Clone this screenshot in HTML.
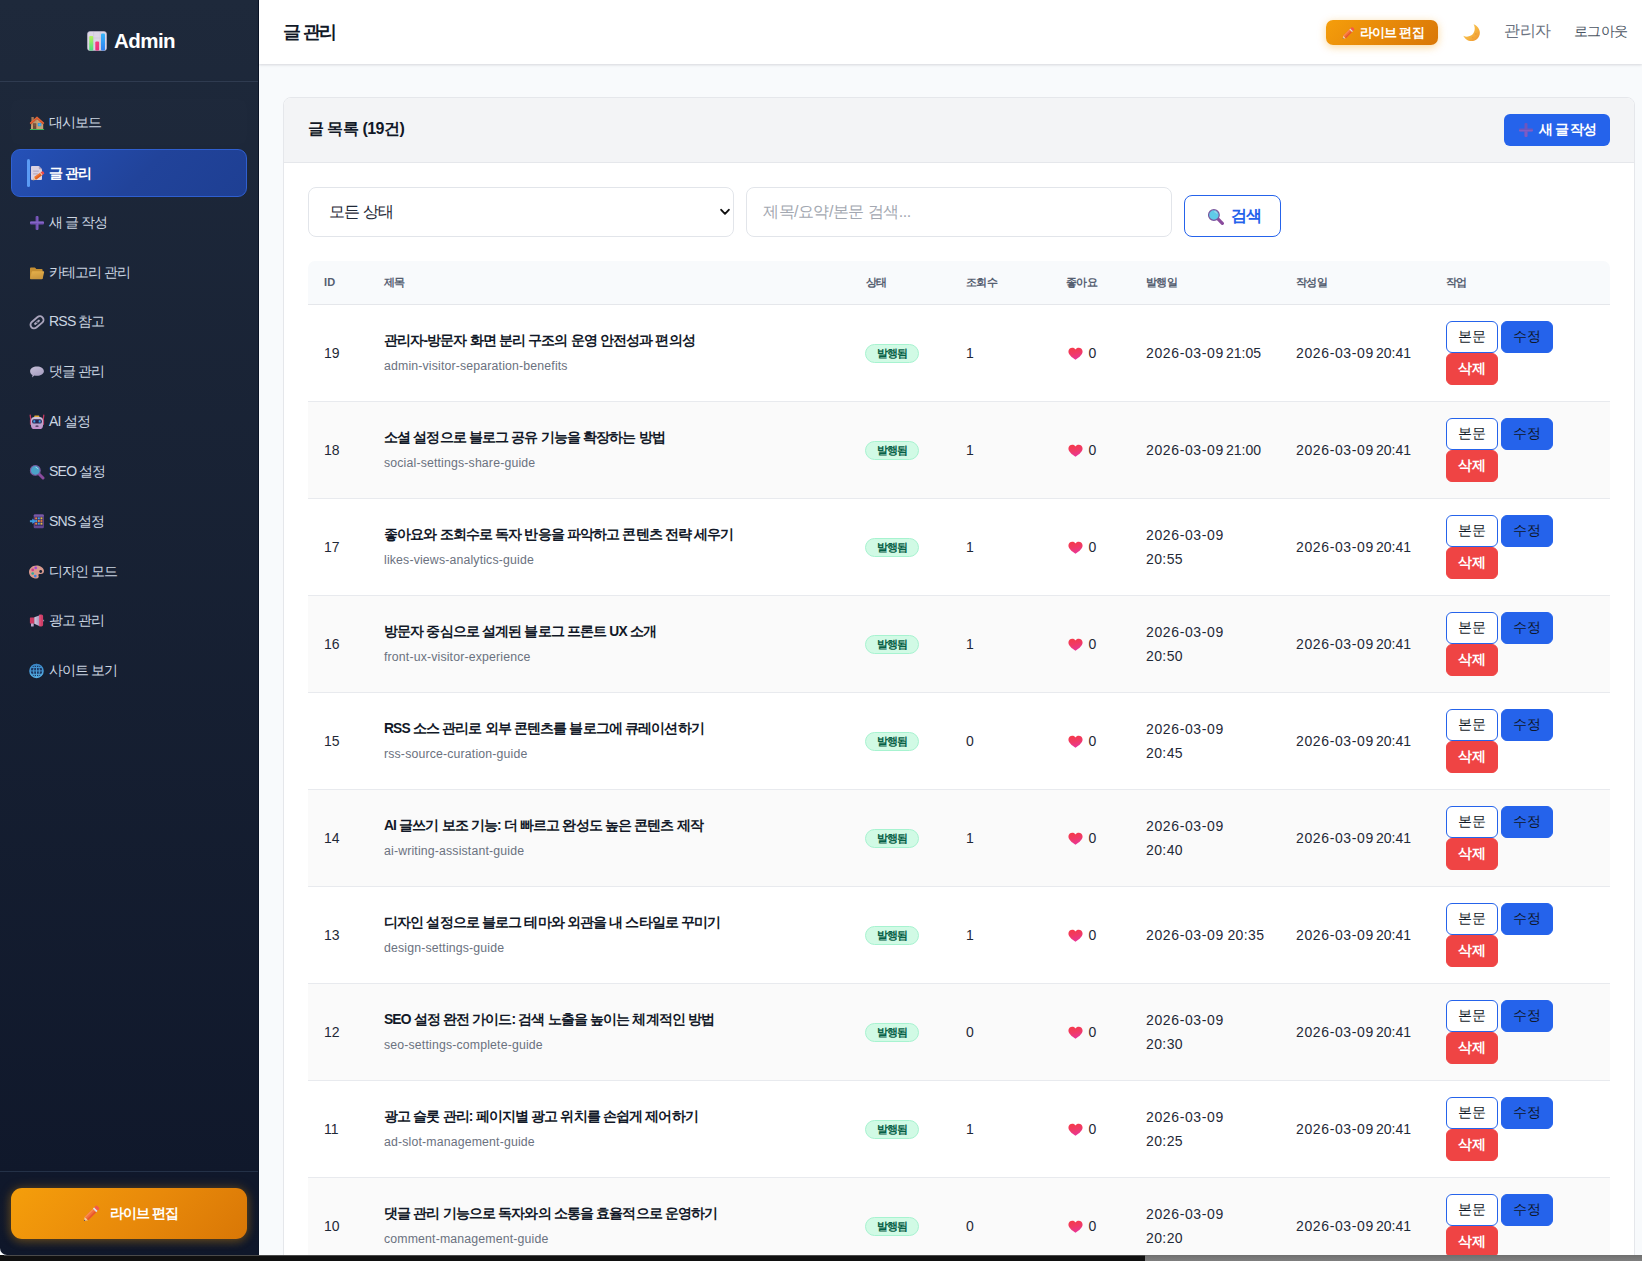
<!DOCTYPE html>
<html lang="ko">
<head>
<meta charset="utf-8">
<title>글 관리 - Admin</title>
<style>
*{box-sizing:border-box;margin:0;padding:0}
html,body{width:1642px;height:1261px;overflow:hidden}
body{font-family:"Liberation Sans",sans-serif;background:#f8fafc;color:#111827;position:relative}
svg{display:block}

/* ---------- sidebar ---------- */
.sidebar{position:absolute;left:0;top:0;width:259px;height:1255px;background:linear-gradient(180deg,#1e293b 0%,#0f172a 100%);border-right:1px solid #0b1426;border-bottom-left-radius:7px;overflow:hidden}
.brand{position:absolute;left:0;top:0;width:258px;height:82px;border-bottom:1px solid #2f3b50}
.brand .logo{position:absolute;left:87px;top:31px;width:20px;height:20px}
.brand .name{position:absolute;left:114px;top:28px;font-size:20.5px;line-height:26px;font-weight:700;color:#fff;letter-spacing:-.55px}
.nav{position:absolute;left:11px;top:99px;width:236px}
.nav a{display:block;position:relative;height:46px;margin-bottom:3.85px;border-radius:9px;color:#cbd5e1;text-decoration:none;font-size:14px;line-height:46px;padding-left:38px;white-space:nowrap;letter-spacing:-1px}
.nav a u{text-decoration:none;letter-spacing:-.75px}
.nav a .ic{position:absolute;left:18px;top:16px;width:16px;height:16px}
.nav a.hov{background:rgba(255,255,255,.008)}
.nav a.active{height:48px;line-height:46px;margin-top:0;margin-bottom:1.85px;background:linear-gradient(135deg,#2551b8 0%,#21439a 55%,#1e3f93 100%);border:1px solid #2f5fd0;color:#fff;font-weight:700;padding-left:37px}
.nav a.active .ic{left:17px;top:15px}
.nav a.active:before{content:"";position:absolute;left:15px;top:9px;width:3px;height:28px;border-radius:2px;background:#5b9bf5}
.sfoot{position:absolute;left:0;top:1171px;width:258px;height:84px;border-top:1px solid #243147}
.livebtn{position:absolute;left:11px;top:16px;width:236px;height:51px;border-radius:11px;background:linear-gradient(135deg,#f59e0b 0%,#e8890a 55%,#d97706 100%);box-shadow:0 0 12px rgba(245,158,11,.28),0 3px 10px rgba(245,158,11,.2);color:#fff;font-weight:700;font-size:14px;line-height:51px;text-align:left;white-space:nowrap}
.livebtn .ic{position:absolute;left:72px;top:16px;width:18px;height:18px}
.livebtn span{position:absolute;left:99px;top:0;letter-spacing:-.95px}

/* ---------- topbar ---------- */
.topbar{position:absolute;left:259px;top:0;width:1383px;height:64px;background:#fff;box-shadow:0 1px 3px rgba(15,23,42,.10),0 1px 2px rgba(15,23,42,.05)}
.topbar h1{position:absolute;left:24px;top:19px;font-size:18.4px;line-height:26px;font-weight:700;color:#111827;white-space:nowrap;letter-spacing:-2.1px;word-spacing:1px}
.tb-live{position:absolute;left:1067px;top:20px;width:112px;height:25px;border-radius:7px;background:linear-gradient(135deg,#f59e0b 0%,#e48509 60%,#d97706 100%);box-shadow:0 2px 9px rgba(245,158,11,.40);color:#fff;font-size:13px;font-weight:700;line-height:25px;white-space:nowrap}
.tb-live .ic{position:absolute;left:15.5px;top:5.500px;width:13.500px;height:13.500px}
.tb-live span{position:absolute;left:34px;top:0;letter-spacing:-.8px}
.moon{position:absolute;left:1202.5px;top:23px;width:19px;height:19px}
.tb-user{position:absolute;left:1245px;top:20px;font-size:15.6px;line-height:22px;color:#6b7280;white-space:nowrap;letter-spacing:-.5px}
.tb-out{position:absolute;left:1315px;top:21px;font-size:14px;line-height:20px;color:#4b5563;white-space:nowrap;letter-spacing:-.6px}

/* ---------- card ---------- */
.card{position:absolute;left:283px;top:97px;width:1352px;height:1200px;background:#fff;border:1px solid #e5e7eb;border-radius:8px;overflow:hidden}
.card-h{position:absolute;left:0;top:0;width:1350px;height:65px;background:#f3f4f6;border-bottom:1px solid #e5e7eb}
.card-h h2{position:absolute;left:24px;top:19px;font-size:16px;line-height:24px;font-weight:700;color:#111827;white-space:nowrap;letter-spacing:-.5px}
.newbtn{position:absolute;left:1220px;top:16px;width:106px;height:32px;border-radius:6px;background:#2563eb;color:#fff;font-size:13.5px;font-weight:700;line-height:32px;white-space:nowrap}
.newbtn .ic{position:absolute;left:14px;top:8px;width:16px;height:16px}
.newbtn span{position:absolute;left:35px;top:0;letter-spacing:-1.05px}

/* filters */
.sel{position:absolute;left:24px;top:89px;width:426px;height:50px;border:1px solid #e2e5ea;border-radius:8px;background:#fff;font-size:16px;line-height:48px;padding-left:20px;color:#1f2937;white-space:nowrap;letter-spacing:-.8px}
.sel .chev{position:absolute;right:3px;top:20px;width:10px;height:8px}
.inp{position:absolute;left:462px;top:89px;width:426px;height:50px;border:1px solid #e2e5ea;border-radius:8px;background:#fff;font-size:16px;line-height:48px;padding-left:16px;color:#a3a8b1;white-space:nowrap;letter-spacing:-.5px}
.sbtn{position:absolute;left:900px;top:97px;width:97px;height:42px;border:1px solid #2563eb;border-radius:8px;background:#fff;color:#2563eb;font-size:15.600px;font-weight:700;line-height:40px;white-space:nowrap}
.sbtn .ic{position:absolute;left:21.500px;top:11.500px;width:17.500px;height:17.500px}
.sbtn .ic circle:first-of-type{fill:#5fcbe8}
.sbtn span{position:absolute;left:46px;top:-.5px;letter-spacing:-1.500px}

/* table */
.tbl{position:absolute;left:24px;top:163px;width:1302px}
.thead{position:relative;height:44px;background:#f8fafc;border-bottom:1px solid #e5e7eb;border-radius:7px 7px 0 0;font-size:11.2px;color:#566071;font-weight:700}
.thead span{position:absolute;top:0;line-height:42px;white-space:nowrap;letter-spacing:-.6px}
.thead span.id{letter-spacing:.3px;font-size:11px}
.row{position:relative;height:97px;border-bottom:1px solid #e8eaee;background:#fff}
.row.alt{background:#fafafa}
.row>*{position:absolute;white-space:nowrap}
.c-id{left:16px;top:37px;font-size:14px;line-height:22px;color:#1f2937}
.c-t{left:76px;top:24px;font-size:13.8px;line-height:24px;font-weight:700;color:#111827;letter-spacing:-.85px}
.c-s{left:76px;top:52px;font-size:12.3px;line-height:18px;color:#6b7280;letter-spacing:.16px}
.badge{left:557px;top:39px;width:54px;height:19px;border-radius:10px;background:#d1fae5;border:1px solid #a7f3d0;color:#065f46;font-size:11px;font-weight:700;line-height:16.500px;text-align:center;letter-spacing:-.7px}
.c-v{left:658px;top:37px;font-size:14px;line-height:22px;color:#1f2937}
.c-h{left:760.200px;top:42px;width:15px;height:13.500px}
.c-l{left:780.5px;top:37px;font-size:14px;line-height:22px;color:#1f2937}
.c-p{left:838px;font-size:14px;line-height:24px;color:#1f2937;letter-spacing:.63px;word-spacing:-1px}
.row i{font-style:normal;letter-spacing:.4px}
.row i.n{letter-spacing:0;margin-left:-1.4px}
.c-p.one{top:36px}.c-p.two{top:24px}
.c-c{left:988px;top:36px;font-size:14px;line-height:24px;color:#1f2937;letter-spacing:.63px;word-spacing:-1px}
.b{width:52px;height:32px;border-radius:6px;font-size:13.5px;line-height:30px;text-align:center;letter-spacing:-.3px}
.b1{left:1138px;top:16px;border:1px solid #2563eb;background:#fff;color:#111827}
.b2{left:1193px;top:16px;border:1px solid #2563eb;background:#2563eb;color:#0f172a}
.b3{left:1138px;top:48px;border:1px solid #ef4444;background:#ef4444;color:#fff;font-weight:700}

/* bottom window edge */
.strip{position:absolute;left:0;top:1255px;width:1642px;height:6px;background:#101010}
.strip i{position:absolute;left:1145px;top:0;width:497px;height:6px;background:linear-gradient(180deg,#6f6f6f,#7f7f7f)}
.strip b{position:absolute;left:4px;top:0;width:1141px;height:1px;background:#4a4a4a}
</style>
</head>
<body>
<aside class="sidebar">
<div class="brand"><svg class="logo" viewBox="0 0 20 20"><defs><linearGradient id="lg1" x1="0" y1="0" x2="0" y2="1"><stop offset="0" stop-color="#b6f25a"/><stop offset="1" stop-color="#4ade80"/></linearGradient><linearGradient id="lg2" x1="0" y1="0" x2="0" y2="1"><stop offset="0" stop-color="#f43f7f"/><stop offset="1" stop-color="#e8317a"/></linearGradient><linearGradient id="lg3" x1="0" y1="0" x2="0" y2="1"><stop offset="0" stop-color="#38b6f9"/><stop offset="1" stop-color="#2f7ff0"/></linearGradient></defs><rect x=".5" y=".5" width="19" height="19" rx="2.6" fill="#ddd6e6" stroke="#c5bdd2" stroke-width=".6"/><path d="M6.6 1v18M13.2 1v18M1 7h18M1 13h18" stroke="#c9c1d6" stroke-width=".5"/><rect x="2.2" y="5" width="4" height="14.4" rx="1" fill="url(#lg1)"/><rect x="8.3" y="10.6" width="3.8" height="8.8" rx="1" fill="url(#lg2)"/><rect x="14" y="2.6" width="4" height="16.8" rx="1" fill="url(#lg3)"/></svg><div class="name">Admin</div></div>
<nav class="nav">
<a href="#" class="hov"><svg class="ic" viewBox="0 0 16 16"><rect x="2.400" y="2" width="2.400" height="5.500" fill="#a57a55"/><path d="M8 3.800 2 9.200V14h12.200V9.200z" fill="#c7a074"/><path d="M2 9.200 8 3.800v2.600L2 11.400z" fill="#b08a62" opacity=".55"/><path d="M8 1.500.700 8.100l1.300 1.400L8 4.100l6 5.400 1.300-1.400z" fill="#d9532c"/><path d="M8 1.500.700 8.100l.6.700L8 2.900l6.700 5.900.6-.7z" fill="#e8703c" opacity=".7"/><rect x="4" y="8.300" width="3.300" height="5.700" fill="#6f4b39"/><rect x="4.600" y="8.900" width="2.100" height="2.200" fill="#7d5744"/><rect x="8.800" y="8" width="3.500" height="3.200" fill="#2f8fd8"/><rect x="9.400" y="8.600" width="2.300" height="2" fill="#4db4f0"/><rect x=".8" y="14" width="14.400" height="1.100" rx=".5" fill="#3fb35a"/></svg>대시보드</a>
<a href="#" class="active"><svg class="ic" viewBox="0 0 16 16"><path d="M3 1h6.800L13 4.200V14a1 1 0 0 1-1 1H3a1 1 0 0 1-1-1V2a1 1 0 0 1 1-1z" fill="#dcd2e2"/><path d="M9.800 1 13 4.200H10.700a.9.900 0 0 1-.9-.9z" fill="#b3a5bf"/><path d="M4.200 6.200h5.600M4.200 8.800h4.600" stroke="#b7abc2" stroke-width="1.300"/><path d="M5 12.100 11.400 7.500l1.900 2.600L6.900 14.700z" fill="#f2762e"/><path d="M5.900 13.400 12.300 8.800l1 1.300L6.900 14.700z" fill="#e0601f"/><path d="M11.400 7.500l1.500-1.100a1 1 0 0 1 1.400.2l.8 1.100a1 1 0 0 1-.2 1.400l-1.600 1z" fill="#ef4a4a"/><path d="M11 7.800l.6-.5 1.900 2.600-.6.5z" fill="#f3d9c9"/><path d="M5 12.100 3.600 15.600l3.300-.9z" fill="#e8c19a"/><path d="M4 14.600l-.4 1 1-.3z" fill="#3b3345"/></svg>글 관리</a>
<a href="#"><svg class="ic" viewBox="0 0 16 16"><path d="M6.600 2a1 1 0 0 1 1-1h.8a1 1 0 0 1 1 1v4.600H14a1 1 0 0 1 1 1v.8a1 1 0 0 1-1 1H9.400V14a1 1 0 0 1-1 1H7.600a1 1 0 0 1-1-1V9.400H2a1 1 0 0 1-1-1V7.600a1 1 0 0 1 1-1h4.600z" fill="#7150b2"/><path d="M1 7.600a1 1 0 0 1 1-1h12a1 1 0 0 1 1 1V8H1z" fill="#8a6bcb" opacity=".8"/><path d="M8 1h.4a1 1 0 0 1 1 1v12a1 1 0 0 1-1 1H8z" fill="#8060c2" opacity=".6"/></svg>새 글 작성</a>
<a href="#"><svg class="ic" viewBox="0 0 16 16"><defs><linearGradient id="fg" x1="0" y1="0" x2=".3" y2="1"><stop offset="0" stop-color="#e6b04a"/><stop offset="1" stop-color="#c9963e"/></linearGradient></defs><path d="M1 3.500a1 1 0 0 1 1-1h3.600c.4 0 .7.200.9.500l.8 1.100h5.300a1 1 0 0 1 1 1V13a1 1 0 0 1-1 1H2a1 1 0 0 1-1-1z" fill="#c58f33"/><path d="M3.700 6.300h10.600a.8.800 0 0 1 .8 1L13.700 13.400a1 1 0 0 1-1 .8H1.900a.7.700 0 0 1-.7-.9L2.700 7a1 1 0 0 1 1-.7z" fill="url(#fg)"/></svg>카테고리 관리</a>
<a href="#"><svg class="ic" viewBox="0 0 16 16"><g transform="rotate(-40 8 8.300)" fill="none" stroke="#aaa4bc"><rect x=".6" y="4.700" width="14.800" height="7.200" rx="3.600" stroke-width="1.900"/><path d="M5.600 8.300h4.800" stroke-width="2.200" stroke-linecap="round"/></g><g transform="rotate(-40 8 8.300)"><circle cx="8" cy="8.300" r=".7" fill="#1c2539"/></g></svg><u>RSS</u> 참고</a>
<a href="#"><svg class="ic" viewBox="0 0 16 16"><defs><linearGradient id="sg" x1="0" y1="0" x2=".6" y2="1"><stop offset="0" stop-color="#c6c0d8"/><stop offset="1" stop-color="#a69dc0"/></linearGradient></defs><path d="M8 2.600c3.800 0 6.900 2 6.900 4.600S11.800 11.800 8 11.800c-.9 0-1.800-.1-2.600-.300L3 13.400l.5-2.300C2 10.200 1.100 8.800 1.100 7.200 1.100 4.600 4.200 2.600 8 2.600z" fill="url(#sg)"/></svg>댓글 관리</a>
<a href="#"><svg class="ic" viewBox="0 0 16 16"><defs><linearGradient id="rg" x1="0" y1="0" x2="0" y2="1"><stop offset="0" stop-color="#cfc4dd"/><stop offset=".6" stop-color="#b9a5cd"/><stop offset="1" stop-color="#c48dcb"/></linearGradient></defs><path d="M1.200 1.200l.8 6M14.800 1.200l-.8 6" stroke="#c5375f" stroke-width="1.300" stroke-linecap="round"/><rect x=".9" y="5.600" width="2" height="5.400" rx=".9" fill="#b4456f"/><rect x="13.100" y="5.600" width="2" height="5.400" rx=".9" fill="#b4456f"/><rect x="5.200" y="1.600" width="5.200" height="2" rx=".8" fill="#e3aa39"/><rect x="2" y="3" width="12" height="12" rx="3.600" fill="url(#rg)"/><rect x="3.100" y="5.300" width="9.800" height="4.300" rx="1.900" fill="#2a2452"/><rect x="4.300" y="6.300" width="2" height="2.300" rx=".4" fill="#3a9fe6"/><rect x="9.700" y="6.300" width="2" height="2.300" rx=".4" fill="#3a9fe6"/><rect x="6.500" y="11.500" width="3" height="1.300" rx=".4" fill="#3d2b4d"/></svg><u>AI</u> 설정</a>
<a href="#"><svg class="ic" viewBox="0 0 16 16"><path d="M10 10 14 14" stroke="#8a4b9d" stroke-width="3" stroke-linecap="round"/><circle cx="6.300" cy="6.400" r="4.900" fill="#4ba3c8"/><circle cx="6.300" cy="6.400" r="4.900" fill="none" stroke="#7b589f" stroke-width="1.100"/><path d="M7 3.300a3.200 3.200 0 0 1 2 1.500" stroke="#9fd6ea" stroke-width="1" fill="none" stroke-linecap="round"/></svg><u>SEO</u> 설정</a>
<a href="#"><svg class="ic" viewBox="0 0 16 16"><rect x="4.700" y=".5" width="10.200" height="13.700" rx="1.300" fill="#64468f"/><rect x="4.700" y=".5" width="10.200" height="2.200" rx="1.100" fill="#7a5aa8"/><rect x="5.700" y="2.800" width="8.200" height="9" fill="#3a2d63"/><g><rect x="6.200" y="3.400" width="1.900" height="1.900" fill="#e8863a"/><rect x="8.850" y="3.400" width="1.900" height="1.900" fill="#3fa0e0"/><rect x="11.500" y="3.400" width="1.900" height="1.900" fill="#e6c040"/><rect x="6.200" y="6.050" width="1.900" height="1.900" fill="#3fa0e0"/><rect x="8.850" y="6.050" width="1.900" height="1.900" fill="#e8863a"/><rect x="11.500" y="6.050" width="1.900" height="1.900" fill="#e07a34"/><rect x="6.200" y="8.700" width="1.900" height="1.900" fill="#e8863a"/><rect x="8.850" y="8.700" width="1.900" height="1.900" fill="#3fa0e0"/><rect x="11.500" y="8.700" width="1.900" height="1.900" fill="#e6c040"/></g><path d="M3.300 4.500 6.800 7.200 3.300 9.900V8.200H.9V6.200h2.400z" fill="#3d9be0"/></svg><u>SNS</u> 설정</a>
<a href="#"><svg class="ic" viewBox="0 0 16 16"><path d="M7.400 1.400c4.200 0 7.600 2.500 7.600 5.700 0 2-1.400 3-3.100 3h-1.500c-.9 0-1.300.8-.9 1.500.6 1.100 0 3-2.100 3C3.300 14.600 0 11.700 0 8s3.300-6.600 7.400-6.600z" fill="#d99a8e"/><circle cx="11.700" cy="7.500" r="1.400" fill="#182035"/><circle cx="6.700" cy="3.900" r="1.350" fill="#a548d2"/><circle cx="3.700" cy="5.900" r="1.350" fill="#d23a8c"/><circle cx="3.700" cy="9.500" r="1.350" fill="#2fa79a"/><circle cx="6.300" cy="12.100" r="1.350" fill="#3a7fe0"/></svg>디자인 모드</a>
<a href="#"><svg class="ic" viewBox="0 0 16 16"><defs><linearGradient id="cg" x1="0" y1="0" x2="1" y2="0"><stop offset="0" stop-color="#d3c9df"/><stop offset="1" stop-color="#a99cc0"/></linearGradient></defs><rect x="2" y="10" width="2.700" height="3.600" rx=".5" fill="#b9a9cc"/><rect x=".9" y="4.500" width="4.600" height="6" rx=".6" fill="#cc3a63"/><path d="M5.300 4.300 10.200 2.500v10.600L5.300 10.800z" fill="url(#cg)"/><rect x="10" y="1.400" width="4.100" height="12.100" rx="1.700" fill="#cf3f68"/><rect x="10" y="1.400" width="1.600" height="12.100" rx=".8" fill="#e2587f" opacity=".8"/><rect x="14" y="6.800" width="1.100" height="1.500" fill="#8d8aa3"/></svg>광고 관리</a>
<a href="#"><svg class="ic" viewBox="0 0 16 16"><defs><linearGradient id="gg" x1="0" y1="0" x2="0" y2="1"><stop offset="0" stop-color="#3a86c6"/><stop offset="1" stop-color="#57b2e6"/></linearGradient></defs><circle cx="7.500" cy="7.900" r="7.100" fill="#1c3763"/><g fill="none" stroke="url(#gg)"><circle cx="7.500" cy="7.900" r="6.500" stroke-width="1.500"/><ellipse cx="7.500" cy="7.900" rx="2.900" ry="6.500" stroke-width="1"/><path d="M7.500 1.400v13M1 7.900h13M2.100 4.500h10.800M2.100 11.300h10.800" stroke-width="1"/></g></svg>사이트 보기</a>
</nav>
<div class="sfoot"><div class="livebtn"><svg class="ic" viewBox="0 0 17 17"><g transform="translate(.9 16.100) rotate(-45)"><path d="M0 0 3.400-2.300v4.600z" fill="#f0c9a0"/><path d="M0 0 1.200-.8v1.600z" fill="#4a3a55"/><rect x="3.400" y="-2.300" width="10.800" height="4.600" fill="#f4703a"/><rect x="3.400" y="-2.300" width="10.800" height="1.300" fill="#fb8b50"/><rect x="3.400" y=".7" width="10.800" height="1.600" fill="#e8572c"/><rect x="14.200" y="-2.300" width="1.800" height="4.600" fill="#dcdde6"/><path d="M16-2.300h1.600a1.400 1.400 0 0 1 1.400 1.400v1.800a1.400 1.400 0 0 1-1.400 1.400H16z" fill="#f4574a"/></g></svg><span>라이브 편집</span></div></div>
</aside>
<header class="topbar"><h1>글 관리</h1>
<div class="tb-live"><svg class="ic" viewBox="0 0 17 17"><g transform="translate(.9 16.100) rotate(-45)"><path d="M0 0 3.400-2.300v4.600z" fill="#f0c9a0"/><path d="M0 0 1.200-.8v1.600z" fill="#4a3a55"/><rect x="3.400" y="-2.300" width="10.800" height="4.600" fill="#f4703a"/><rect x="3.400" y="-2.300" width="10.800" height="1.300" fill="#fb8b50"/><rect x="3.400" y=".7" width="10.800" height="1.600" fill="#e8572c"/><rect x="14.200" y="-2.300" width="1.800" height="4.600" fill="#dcdde6"/><path d="M16-2.300h1.600a1.400 1.400 0 0 1 1.400 1.400v1.800a1.400 1.400 0 0 1-1.400 1.400H16z" fill="#f4574a"/></g></svg><span>라이브 편집</span></div>
<svg class="moon" viewBox="0 0 20 20"><defs><linearGradient id="mg" x1="0" y1="0" x2="1" y2="1"><stop offset="0" stop-color="#fad15c"/><stop offset=".6" stop-color="#f5b13f"/><stop offset="1" stop-color="#ee8f2e"/></linearGradient></defs><path d="M12.200 1.200c3.600 1.200 6.600 4.800 6.600 9 0 5-4 8.800-8.800 8.800-4 0-7.200-2.400-8.600-5.600 2.200 1.200 5.400 1.400 8-.2 4-2.400 5.200-7.800 2.800-12z" fill="url(#mg)"/><circle cx="14.600" cy="11.600" r="1" fill="#e99a34" opacity=".7"/><circle cx="11.200" cy="15.200" r=".8" fill="#e99a34" opacity=".7"/></svg>
<div class="tb-user">관리자</div><div class="tb-out">로그아웃</div></header>
<section class="card">
<div class="card-h"><h2>글 목록 (19건)</h2><div class="newbtn"><svg class="ic" viewBox="0 0 16 16"><path d="M6.500 2a1 1 0 0 1 1-1h1a1 1 0 0 1 1 1v4.500H14a1 1 0 0 1 1 1v1a1 1 0 0 1-1 1H9.500V14a1 1 0 0 1-1 1h-1a1 1 0 0 1-1-1V9.500H2a1 1 0 0 1-1-1v-1a1 1 0 0 1 1-1h4.500z" fill="#6c56be"/><path d="M1 8h14v.5a1 1 0 0 1-1 1H2a1 1 0 0 1-1-1z" fill="#8f62cc" opacity=".6"/><path d="M6.500 9.500h3V14a1 1 0 0 1-1 1h-1a1 1 0 0 1-1-1z" fill="#8a5fc8" opacity=".6"/></svg><span>새 글 작성</span></div></div>
<div class="sel">모든 상태<svg class="chev" viewBox="0 0 10 8"><path d="M1.200 1.800 5 5.800 8.800 1.800" fill="none" stroke="#111" stroke-width="1.900" stroke-linecap="round" stroke-linejoin="round"/></svg></div>
<div class="inp">제목/요약/본문 검색...</div>
<div class="sbtn"><svg class="ic" viewBox="0 0 16 16"><path d="M10 10 14 14" stroke="#8a4b9d" stroke-width="3" stroke-linecap="round"/><circle cx="6.300" cy="6.400" r="4.900" fill="#4ba3c8"/><circle cx="6.300" cy="6.400" r="4.900" fill="none" stroke="#7b589f" stroke-width="1.100"/><path d="M7 3.300a3.200 3.200 0 0 1 2 1.500" stroke="#9fd6ea" stroke-width="1" fill="none" stroke-linecap="round"/></svg><span>검색</span></div>
<div class="tbl">
<div class="thead"><span class="id" style="left:16px">ID</span><span style="left:76px">제목</span><span style="left:558px">상태</span><span style="left:658px">조회수</span><span style="left:758px">좋아요</span><span style="left:838px">발행일</span><span style="left:988px">작성일</span><span style="left:1138px">작업</span></div>
<div class="row">
<div class="c-id">19</div><div class="c-t">관리자-방문자 화면 분리 구조의 운영 안전성과 편의성</div><div class="c-s">admin-visitor-separation-benefits</div>
<div class="badge">발행됨</div><div class="c-v">1</div><svg class="c-h" viewBox="0 0 14 14" preserveAspectRatio="none"><defs><linearGradient id="hg" x1=".3" y1="0" x2=".6" y2="1"><stop offset="0" stop-color="#f5394a"/><stop offset=".5" stop-color="#f03a68"/><stop offset="1" stop-color="#e8359c"/></linearGradient></defs><path d="M7 13.200C3.400 10.600.4 7.800.4 4.600.4 2.400 2 .8 4 .8c1.300 0 2.400.7 3 1.800C7.600 1.500 8.700.8 10 .8c2 0 3.600 1.600 3.600 3.800 0 3.200-3 6-6.600 8.600z" fill="url(#hg)"/></svg><div class="c-l">0</div>
<div class="c-p one">2026-03-09 <i class="n">21:05</i></div>
<div class="c-c">2026-03-09 <i class="n">20:41</i></div>
<div class="b b1">본문</div><div class="b b2">수정</div><div class="b b3">삭제</div>
</div>
<div class="row alt">
<div class="c-id">18</div><div class="c-t">소셜 설정으로 블로그 공유 기능을 확장하는 방법</div><div class="c-s">social-settings-share-guide</div>
<div class="badge">발행됨</div><div class="c-v">1</div><svg class="c-h" viewBox="0 0 14 14" preserveAspectRatio="none"><defs><linearGradient id="hg" x1=".3" y1="0" x2=".6" y2="1"><stop offset="0" stop-color="#f5394a"/><stop offset=".5" stop-color="#f03a68"/><stop offset="1" stop-color="#e8359c"/></linearGradient></defs><path d="M7 13.200C3.400 10.600.4 7.800.4 4.600.4 2.400 2 .8 4 .8c1.300 0 2.400.7 3 1.800C7.600 1.500 8.700.8 10 .8c2 0 3.600 1.600 3.600 3.800 0 3.200-3 6-6.600 8.600z" fill="url(#hg)"/></svg><div class="c-l">0</div>
<div class="c-p one">2026-03-09 <i class="n">21:00</i></div>
<div class="c-c">2026-03-09 <i class="n">20:41</i></div>
<div class="b b1">본문</div><div class="b b2">수정</div><div class="b b3">삭제</div>
</div>
<div class="row">
<div class="c-id">17</div><div class="c-t">좋아요와 조회수로 독자 반응을 파악하고 콘텐츠 전략 세우기</div><div class="c-s">likes-views-analytics-guide</div>
<div class="badge">발행됨</div><div class="c-v">1</div><svg class="c-h" viewBox="0 0 14 14" preserveAspectRatio="none"><defs><linearGradient id="hg" x1=".3" y1="0" x2=".6" y2="1"><stop offset="0" stop-color="#f5394a"/><stop offset=".5" stop-color="#f03a68"/><stop offset="1" stop-color="#e8359c"/></linearGradient></defs><path d="M7 13.200C3.400 10.600.4 7.800.4 4.600.4 2.400 2 .8 4 .8c1.300 0 2.400.7 3 1.800C7.600 1.500 8.700.8 10 .8c2 0 3.600 1.600 3.600 3.800 0 3.200-3 6-6.600 8.600z" fill="url(#hg)"/></svg><div class="c-l">0</div>
<div class="c-p two">2026-03-09<br><i>20:55</i></div>
<div class="c-c">2026-03-09 <i class="n">20:41</i></div>
<div class="b b1">본문</div><div class="b b2">수정</div><div class="b b3">삭제</div>
</div>
<div class="row alt">
<div class="c-id">16</div><div class="c-t">방문자 중심으로 설계된 블로그 프론트 UX 소개</div><div class="c-s">front-ux-visitor-experience</div>
<div class="badge">발행됨</div><div class="c-v">1</div><svg class="c-h" viewBox="0 0 14 14" preserveAspectRatio="none"><defs><linearGradient id="hg" x1=".3" y1="0" x2=".6" y2="1"><stop offset="0" stop-color="#f5394a"/><stop offset=".5" stop-color="#f03a68"/><stop offset="1" stop-color="#e8359c"/></linearGradient></defs><path d="M7 13.200C3.400 10.600.4 7.800.4 4.600.4 2.400 2 .8 4 .8c1.300 0 2.400.7 3 1.800C7.600 1.500 8.700.8 10 .8c2 0 3.600 1.600 3.600 3.800 0 3.200-3 6-6.600 8.600z" fill="url(#hg)"/></svg><div class="c-l">0</div>
<div class="c-p two">2026-03-09<br><i>20:50</i></div>
<div class="c-c">2026-03-09 <i class="n">20:41</i></div>
<div class="b b1">본문</div><div class="b b2">수정</div><div class="b b3">삭제</div>
</div>
<div class="row">
<div class="c-id">15</div><div class="c-t">RSS 소스 관리로 외부 콘텐츠를 블로그에 큐레이션하기</div><div class="c-s">rss-source-curation-guide</div>
<div class="badge">발행됨</div><div class="c-v">0</div><svg class="c-h" viewBox="0 0 14 14" preserveAspectRatio="none"><defs><linearGradient id="hg" x1=".3" y1="0" x2=".6" y2="1"><stop offset="0" stop-color="#f5394a"/><stop offset=".5" stop-color="#f03a68"/><stop offset="1" stop-color="#e8359c"/></linearGradient></defs><path d="M7 13.200C3.400 10.600.4 7.800.4 4.600.4 2.400 2 .8 4 .8c1.300 0 2.400.7 3 1.800C7.600 1.500 8.700.8 10 .8c2 0 3.600 1.600 3.600 3.800 0 3.200-3 6-6.600 8.600z" fill="url(#hg)"/></svg><div class="c-l">0</div>
<div class="c-p two">2026-03-09<br><i>20:45</i></div>
<div class="c-c">2026-03-09 <i class="n">20:41</i></div>
<div class="b b1">본문</div><div class="b b2">수정</div><div class="b b3">삭제</div>
</div>
<div class="row alt">
<div class="c-id">14</div><div class="c-t">AI 글쓰기 보조 기능: 더 빠르고 완성도 높은 콘텐츠 제작</div><div class="c-s">ai-writing-assistant-guide</div>
<div class="badge">발행됨</div><div class="c-v">1</div><svg class="c-h" viewBox="0 0 14 14" preserveAspectRatio="none"><defs><linearGradient id="hg" x1=".3" y1="0" x2=".6" y2="1"><stop offset="0" stop-color="#f5394a"/><stop offset=".5" stop-color="#f03a68"/><stop offset="1" stop-color="#e8359c"/></linearGradient></defs><path d="M7 13.200C3.400 10.600.4 7.800.4 4.600.4 2.400 2 .8 4 .8c1.300 0 2.400.7 3 1.800C7.600 1.500 8.700.8 10 .8c2 0 3.600 1.600 3.600 3.800 0 3.200-3 6-6.600 8.600z" fill="url(#hg)"/></svg><div class="c-l">0</div>
<div class="c-p two">2026-03-09<br><i>20:40</i></div>
<div class="c-c">2026-03-09 <i class="n">20:41</i></div>
<div class="b b1">본문</div><div class="b b2">수정</div><div class="b b3">삭제</div>
</div>
<div class="row">
<div class="c-id">13</div><div class="c-t">디자인 설정으로 블로그 테마와 외관을 내 스타일로 꾸미기</div><div class="c-s">design-settings-guide</div>
<div class="badge">발행됨</div><div class="c-v">1</div><svg class="c-h" viewBox="0 0 14 14" preserveAspectRatio="none"><defs><linearGradient id="hg" x1=".3" y1="0" x2=".6" y2="1"><stop offset="0" stop-color="#f5394a"/><stop offset=".5" stop-color="#f03a68"/><stop offset="1" stop-color="#e8359c"/></linearGradient></defs><path d="M7 13.200C3.400 10.600.4 7.800.4 4.600.4 2.400 2 .8 4 .8c1.300 0 2.400.7 3 1.800C7.600 1.500 8.700.8 10 .8c2 0 3.600 1.600 3.600 3.800 0 3.200-3 6-6.600 8.600z" fill="url(#hg)"/></svg><div class="c-l">0</div>
<div class="c-p one">2026-03-09 <i>20:35</i></div>
<div class="c-c">2026-03-09 <i class="n">20:41</i></div>
<div class="b b1">본문</div><div class="b b2">수정</div><div class="b b3">삭제</div>
</div>
<div class="row alt">
<div class="c-id">12</div><div class="c-t">SEO 설정 완전 가이드: 검색 노출을 높이는 체계적인 방법</div><div class="c-s">seo-settings-complete-guide</div>
<div class="badge">발행됨</div><div class="c-v">0</div><svg class="c-h" viewBox="0 0 14 14" preserveAspectRatio="none"><defs><linearGradient id="hg" x1=".3" y1="0" x2=".6" y2="1"><stop offset="0" stop-color="#f5394a"/><stop offset=".5" stop-color="#f03a68"/><stop offset="1" stop-color="#e8359c"/></linearGradient></defs><path d="M7 13.200C3.400 10.600.4 7.800.4 4.600.4 2.400 2 .8 4 .8c1.300 0 2.400.7 3 1.800C7.600 1.500 8.700.8 10 .8c2 0 3.600 1.600 3.600 3.800 0 3.200-3 6-6.600 8.600z" fill="url(#hg)"/></svg><div class="c-l">0</div>
<div class="c-p two">2026-03-09<br><i>20:30</i></div>
<div class="c-c">2026-03-09 <i class="n">20:41</i></div>
<div class="b b1">본문</div><div class="b b2">수정</div><div class="b b3">삭제</div>
</div>
<div class="row">
<div class="c-id">11</div><div class="c-t">광고 슬롯 관리: 페이지별 광고 위치를 손쉽게 제어하기</div><div class="c-s">ad-slot-management-guide</div>
<div class="badge">발행됨</div><div class="c-v">1</div><svg class="c-h" viewBox="0 0 14 14" preserveAspectRatio="none"><defs><linearGradient id="hg" x1=".3" y1="0" x2=".6" y2="1"><stop offset="0" stop-color="#f5394a"/><stop offset=".5" stop-color="#f03a68"/><stop offset="1" stop-color="#e8359c"/></linearGradient></defs><path d="M7 13.200C3.400 10.600.4 7.800.4 4.600.4 2.400 2 .8 4 .8c1.300 0 2.400.7 3 1.800C7.600 1.500 8.700.8 10 .8c2 0 3.600 1.600 3.600 3.800 0 3.200-3 6-6.600 8.600z" fill="url(#hg)"/></svg><div class="c-l">0</div>
<div class="c-p two">2026-03-09<br><i>20:25</i></div>
<div class="c-c">2026-03-09 <i class="n">20:41</i></div>
<div class="b b1">본문</div><div class="b b2">수정</div><div class="b b3">삭제</div>
</div>
<div class="row alt">
<div class="c-id">10</div><div class="c-t">댓글 관리 기능으로 독자와의 소통을 효율적으로 운영하기</div><div class="c-s">comment-management-guide</div>
<div class="badge">발행됨</div><div class="c-v">0</div><svg class="c-h" viewBox="0 0 14 14" preserveAspectRatio="none"><defs><linearGradient id="hg" x1=".3" y1="0" x2=".6" y2="1"><stop offset="0" stop-color="#f5394a"/><stop offset=".5" stop-color="#f03a68"/><stop offset="1" stop-color="#e8359c"/></linearGradient></defs><path d="M7 13.200C3.400 10.600.4 7.800.4 4.600.4 2.400 2 .8 4 .8c1.300 0 2.400.7 3 1.800C7.600 1.500 8.700.8 10 .8c2 0 3.600 1.600 3.600 3.800 0 3.200-3 6-6.600 8.600z" fill="url(#hg)"/></svg><div class="c-l">0</div>
<div class="c-p two">2026-03-09<br><i>20:20</i></div>
<div class="c-c">2026-03-09 <i class="n">20:41</i></div>
<div class="b b1">본문</div><div class="b b2">수정</div><div class="b b3">삭제</div>
</div>
</div></section>
<div class="strip"><b></b><i></i></div>
</body></html>
